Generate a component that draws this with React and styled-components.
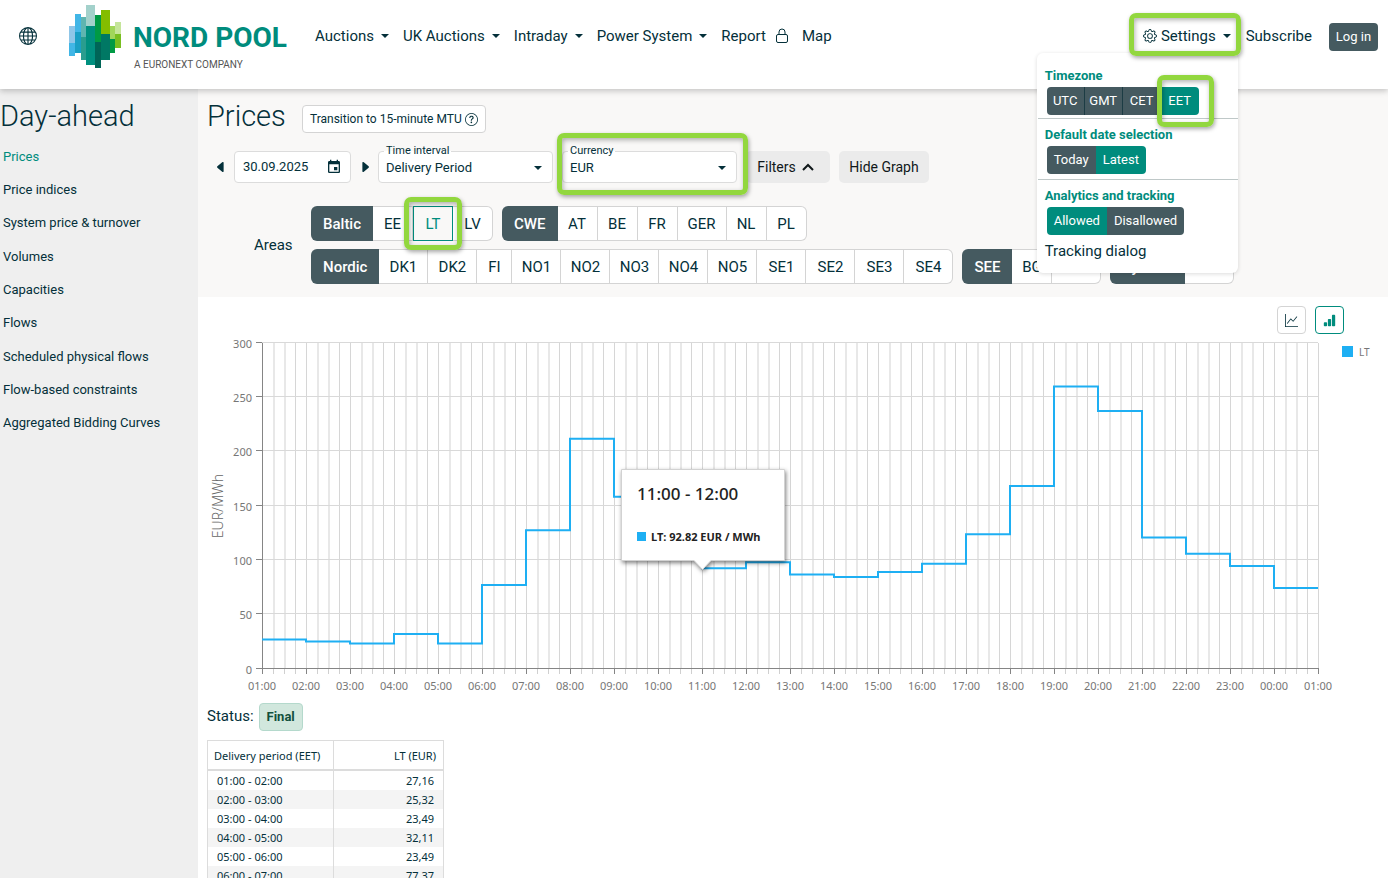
import React from "react";
import styled, { createGlobalStyle, css } from "styled-components";
import {
  BsGlobe,
  BsGear,
  BsGraphUp,
  BsBarChartFill,
  BsQuestionCircle,
  BsCaretLeftFill,
  BsCaretRightFill,
} from "react-icons/bs";
import { MdEvent } from "react-icons/md";

const ink = "#04303a";
const slate = "#455a60";
const teal = "#008c7d";
const line = "#d4d4d4";

const GlobalStyle = createGlobalStyle`
  * { box-sizing: border-box; }
  body {
    margin: 0;
    background: #fff;
    color: ${ink};
    font-family: Roboto, "Liberation Sans", sans-serif;
    font-size: 15px;
    line-height: 20px;
  }
  button, input, select { font: inherit; color: inherit; }
  button { cursor: pointer; }
`;

const Page = styled.div`
  display: flex;
  flex-direction: column;
  height: 100vh;
  overflow: hidden;
`;

/* ---------- header ---------- */

const Header = styled.header`
  position: relative;
  z-index: 5;
  flex: none;
  display: flex;
  align-items: flex-start;
  height: 89px;
  padding-right: 10px;
  background: #fff;
  box-shadow: 0 2px 6px rgba(0, 0, 0, 0.22);
`;

const IconButton = styled.button`
  display: flex;
  align-items: center;
  justify-content: center;
  padding: 0;
  border: 0;
  background: none;
  svg { flex: none; }
`;

const LanguageButton = styled(IconButton)`
  width: 20px;
  height: 20px;
  margin: 26px 30px 0 18px;
`;

const LogoLink = styled.a`
  display: block;
  width: 232px;
  height: 72px;
  svg { display: block; }
`;

const Nav = styled.nav`
  display: flex;
  gap: 14px;
  margin: 26px auto 0 15px;
`;

const navItem = css`
  display: flex;
  align-items: center;
  gap: 7px;
  padding: 0;
  border: 0;
  background: none;
  color: ${ink};
  text-decoration: none;
  white-space: nowrap;
  height: 20px;
`;

const NavButton = styled.button`${navItem}`;
const NavLink = styled.a`
  ${navItem}
  gap: 10px;
`;

const Caret = styled.span`
  width: 0;
  height: 0;
  border: 4px solid transparent;
  border-top-color: ${ink};
  border-bottom: 0;
`;

const Account = styled.div`
  display: flex;
  align-items: flex-start;
  padding-top: 26px;
`;

const SettingsMenu = styled.div`
  position: relative;
  margin-right: 15px;
`;

const SettingsButton = styled(NavButton)`
  gap: 4px;
  span { margin-left: 3px; }
`;

const SubscribeLink = styled(NavLink)`
  margin-right: 17px;
`;

const LoginButton = styled.button`
  width: 49px;
  height: 28px;
  margin-top: -3px;
  padding: 0;
  border: 0;
  border-radius: 4px;
  background: ${slate};
  color: #fff;
  font-size: 13px;
`;

const Highlight = styled.span`
  position: absolute;
  z-index: 3;
  inset: ${(p) => p.$inset};
  border: 5px solid #92d73e;
  border-radius: 7px;
  box-shadow: 1px 2px 4px rgba(0, 0, 0, 0.35), inset 1px 2px 5px rgba(0, 0, 0, 0.3);
  pointer-events: none;
`;

const Popup = styled.div`
  position: absolute;
  top: 27px;
  right: -7px;
  width: 201px;
  height: 220px;
  padding: 13px 0 0 1px;
  border-radius: 6px;
  background: #fff;
  box-shadow: 0 1px 4px rgba(0, 0, 0, 0.14);
`;

const PopupSection = styled.section`
  height: 61px;
  padding-left: 7px;
  & + & { border-top: 1px solid #bfc8c8; padding-top: 6px; }
  &:first-child { height: 52px; }
`;

const PopupTitle = styled.h3`
  margin: 0;
  color: ${teal};
  font-size: 13px;
  font-weight: 700;
  line-height: 20px;
`;

const Segments = styled.div`
  display: flex;
  margin: 1px 0 0 2px;
`;

const Segment = styled.button`
  position: relative;
  height: 28px;
  min-width: 38px;
  padding: 0 ${(p) => (p.$tight ? "4px" : "7px")};
  border: 0;
  border-right: ${(p) => (p.$divided ? "1px solid #1c3c44" : "0")};
  background: ${(p) => (p.$active ? teal : slate)};
  color: #fff;
  font-size: 13px;
  &:first-child { border-radius: 4px 0 0 4px; }
  &:last-child { border-radius: 0 4px 4px 0; }
`;

const TrackingLink = styled.a`
  display: block;
  padding-left: 7px;
  margin-top: 1px;
  color: ${ink};
  text-decoration: none;
`;

/* ---------- body ---------- */

const Body = styled.div`
  flex: 1;
  display: flex;
  min-height: 0;
`;

const Sidebar = styled.aside`
  flex: none;
  width: 198px;
  padding-top: 11px;
  background: #efefef;
`;

const Heading = styled.h1`
  margin: 0;
  font-size: 29px;
  font-weight: 300;
  line-height: 32px;
`;

const SideNav = styled.nav`
  display: grid;
  grid-auto-rows: 1fr;
  height: 300px;
  margin-top: 8px;
`;

const SideLink = styled.a`
  display: flex;
  align-items: center;
  padding-left: 3px;
  color: ${(p) => (p.$active ? teal : ink)};
  font-size: 13px;
  text-decoration: none;
`;

const Main = styled.main`
  flex: 1;
  min-width: 0;
`;

const FilterPanel = styled.section`
  padding: 11px 9px 13px;
  background: #f9f8f7;
`;

const TitleRow = styled.div`
  display: flex;
  align-items: flex-start;
  gap: 16px;
`;

const InfoButton = styled.button`
  display: flex;
  align-items: center;
  justify-content: center;
  gap: 3px;
  width: 184px;
  height: 28px;
  margin-top: 5px;
  padding: 0;
  border: 1px solid ${line};
  border-radius: 4px;
  background: #fff;
  font-size: 12px;
  white-space: nowrap;
`;

const Controls = styled.div`
  display: flex;
  align-items: center;
  gap: 9px;
  margin-top: 18px;
`;

const StepButton = styled(IconButton)`
  width: 9px;
  height: 32px;
  margin-left: ${(p) => (p.$first ? "9px" : "0")};
`;

const DateField = styled.div`
  display: flex;
  align-items: center;
  width: 117px;
  height: 32px;
  padding: 0 8px;
  border: 1px solid #dcdcdc;
  border-radius: 4px;
  background: #fff;
  input {
    flex: 1;
    min-width: 0;
    padding: 0;
    border: 0;
    background: none;
    font-size: 13px;
    outline: 0;
  }
`;

const Field = styled.div`
  position: relative;
  width: 175px;
  height: 32px;
  label {
    position: absolute;
    top: -6px;
    left: 6px;
    padding: 0 2px;
    background: linear-gradient(#f9f8f7 50%, #fff 50%);
    font-size: 11px;
    line-height: 12px;
  }
  select {
    width: 100%;
    height: 100%;
    padding: 1px 7px 0;
    border: 1px solid #dcdcdc;
    border-radius: 4px;
    background: #fff;
    font-size: 13px;
    appearance: none;
    outline: 0;
  }
`;

const FieldCaret = styled(Caret)`
  position: absolute;
  top: 15px;
  right: 11px;
  pointer-events: none;
`;

const PlainButton = styled.button`
  display: flex;
  align-items: center;
  justify-content: center;
  gap: 6px;
  width: ${(p) => (p.$wide ? "90px" : "84px")};
  height: 32px;
  padding: 0 ${(p) => (p.$wide ? "0" : "5px")} 0 0;
  border: 0;
  border-radius: 5px;
  background: #ebebeb;
  font-size: 14px;
  color: #10181a;
`;

const Areas = styled.div`
  display: flex;
  align-items: center;
  margin-top: 23px;
  padding-left: 47px;
`;

const AreasLabel = styled.div`
  flex: none;
  width: 57px;
`;

const AreaGroups = styled.div`
  display: flex;
  flex-wrap: wrap;
  gap: 8px 9px;
`;

const AreaGroup = styled.div`
  display: flex;
  height: 35px;
`;

const GroupButton = styled.button`
  padding: 0 12px;
  border: 0;
  border-radius: 6px 0 0 6px;
  background: ${slate};
  color: #fff;
  font-weight: 500;
`;

const AreaCell = styled.div`
  position: relative;
  display: flex;
`;

const areaWidths = { narrow: "35px", pair: "40px", triple: "49px" };

const AreaButton = styled.button`
  width: ${(p) => areaWidths[p.$size]};
  padding: 0;
  border: 1px solid ${(p) => (p.$active ? teal : line)};
  border-left-width: ${(p) => (p.$active ? "1px" : "0")};
  border-radius: ${(p) => (p.$last ? "0 6px 6px 0" : "0")};
  background: ${(p) => (p.$active ? "#f9f8f7" : "#fff")};
  color: ${(p) => (p.$active ? teal : ink)};
`;

/* ---------- chart ---------- */

const ChartTools = styled.div`
  display: flex;
  justify-content: flex-end;
  gap: 9px;
  padding: 9px 44px 1px 0;
`;

const ToolButton = styled.button`
  display: flex;
  align-items: center;
  justify-content: center;
  width: 29px;
  height: 28px;
  padding: 0;
  border: 1px solid ${(p) => (p.$active ? teal : line)};
  border-radius: 4px;
  background: #fff;
  color: ${(p) => (p.$active ? teal : ink)};
`;

const ChartBox = styled.div`
  padding-left: 9px;
  svg {
    display: block;
    width: 100%;
    height: auto;
    overflow: visible;
    font-family: "Noto Sans", "Open Sans", sans-serif;
  }
`;

const StatusRow = styled.div`
  display: flex;
  align-items: flex-start;
  gap: 5px;
  margin-top: 7px;
  padding-left: 9px;
  line-height: 26px;
`;

const Badge = styled.span`
  padding: 0 7px;
  border: 1px solid #b4d9cc;
  border-radius: 4px;
  background: #d1e7dd;
  color: #12503c;
  font-size: 13px;
  font-weight: 700;
`;

const PriceTable = styled.table`
  width: 237px;
  margin: 9px 0 0 9px;
  border-collapse: separate;
  border-spacing: 0;
  border: 1px solid #dcdcdc;
  font-family: "Noto Sans", "Open Sans", sans-serif;
  font-size: 11px;
  line-height: 18px;
  th {
    height: 30px;
    padding: 1px 7px 0 6px;
    border-bottom: 2px solid #dcdcdc;
    font-weight: 400;
    text-align: left;
  }
  td { height: 19px; padding: 1px 9px 0; }
  th:first-child, td:first-child { width: 126px; border-right: 1px solid #dcdcdc; }
  th:last-child, td:last-child { text-align: right; }
  tbody tr:nth-child(even) { background: #f4f4f4; }
`;

const logoBars = [
  [1, 26, 6, 17, "#8fc6e8"], [1, 43, 6, 13, "#41b6e6"],
  [7, 14, 6, 18, "#41b6e6"], [7, 32, 6, 21, "#1a9fc4"],
  [13, 17, 5, 20, "#5fb5b0"], [13, 37, 5, 23, "#2a9d8f"],
  [18, 5, 9, 21, "#a3d1cb"], [18, 26, 9, 39, "#00907f"],
  [27, 15, 6, 27, "#009a44"], [27, 42, 6, 26, "#006557"],
  [33, 10, 9, 24, "#84bd00"], [33, 34, 9, 26, "#007864"],
  [42, 26, 5, 13, "#a1d65a"], [42, 39, 5, 14, "#009a44"],
  [47, 22, 6, 12, "#c5e59a"], [47, 34, 6, 14, "#78be20"],
];

function Logo() {
  return (
    <svg width="232" height="72" viewBox="0 0 232 72" role="img" aria-label="Nord Pool">
      {logoBars.map(([x, y, w, h, fill]) => (
        <rect key={`${x}-${y}`} x={x} y={y} width={w} height={h} fill={fill} />
      ))}
      <text x="65" y="47" fontSize="28" fontWeight="700" fill={teal}>NORD POOL</text>
      <text x="66" y="68" fontSize="10" fill="#555">A EURONEXT COMPANY</text>
    </svg>
  );
}

function LockIcon() {
  return (
    <svg width="12" height="16" viewBox="0 0 12 16" fill="none" stroke="currentColor" aria-hidden="true">
      <rect x="0.5" y="6.500" width="11" height="8" rx="1.500" />
      <path d="M3 6.500V4a3 3 0 0 1 6 0v2.500" />
    </svg>
  );
}

const prices = [
  27.16, 25.32, 23.49, 32.11, 23.49, 77.37, 127.6, 212, 158.5, 118, 92.82, 98.2,
  87, 84.6, 89.3, 96.8, 124, 168.5, 260, 237.5, 121, 106, 94.8, 74.5,
];

const hour = (n) => `${String(n % 24).padStart(2, "0")}:00`;

function Chart() {
  const left = 55;
  const right = 1111;
  const top = 8;
  const base = 334;
  const step = 44;
  const y = (v) => base - (v * (base - top)) / 300;
  const path = prices
    .map((v, i) => `${i ? "L" : "M"}${left + i * step} ${y(v)}H${left + (i + 1) * step}`)
    .join("");

  return (
    <svg viewBox="0 0 1181 361" role="img" aria-label="LT prices in EUR/MWh">
      {Array.from({ length: 97 }, (_, i) => {
        const soft = i % 4 === 1 || i % 4 === 2;
        return (
          <rect
            key={i}
            x={left + i * 11}
            y={top}
            width={soft ? 2 : 1}
            height={base - top}
            fill={soft ? "#e8e8e8" : "#d6d6d6"}
          />
        );
      })}
      {[0, 50, 100, 150, 200, 250, 300].map((v) => {
        const ly = Math.floor(y(v)) - 0.5;
        return (
          <g key={v}>
            <path d={`M${left} ${ly}H${right}`} stroke="#d9d9d9" />
            <path d={`M${left - 6} ${ly}H${left}`} stroke="#858585" />
            <text x={left - 10} y={ly + 5} fontSize="11" fill="#767676" textAnchor="end">{v}</text>
          </g>
        );
      })}
      <path d={`M${left + 0.5} ${top}V${base + 5}M${left} ${base - 0.5}H${right + 1}`} stroke="#858585" fill="none" />
      {Array.from({ length: 97 }, (_, i) => (
        <path
          key={i}
          d={`M${left + i * 11 + 0.5} ${base}v5`}
          stroke={i % 4 ? "#d0d0d0" : "#858585"}
        />
      ))}
      {Array.from({ length: 25 }, (_, i) => (
        <text key={i} x={left + i * step} y={base + 21} fontSize="11" fill="#767676" textAnchor="middle">
          {hour(i + 1)}
        </text>
      ))}
      <text transform="translate(16 171) rotate(-90)" fontSize="14" fontWeight="300" fill="#666" textAnchor="middle">EUR/MWh</text>
      <path d={path} fill="none" stroke="#1eaff3" strokeWidth="2" />
      <rect x="1135" y="11" width="11" height="11" fill="#1eaff3" />
      <text x="1152" y="21" fontSize="10" fill="#767676">LT</text>
      <g>
        <path
          d="M414.500 134.500H577.500V225.500H504L495.500 234.500L487 225.500H414.500Z"
          fill="#fff"
          stroke="#d2d2d2"
          filter="drop-shadow(1px 2px 2px rgba(0,0,0,0.5))"
        />
        <text x="430" y="165" fontSize="17" fontWeight="500" fill="#222">11:00 - 12:00</text>
        <rect x="430" y="197" width="9" height="9" fill="#1eaff3" />
        <text x="444" y="206" fontSize="11" fontWeight="700" fill="#222">LT: 92.82 EUR / MWh</text>
      </g>
    </svg>
  );
}

const sideLinks = [
  "Prices", "Price indices", "System price & turnover", "Volumes", "Capacities",
  "Flows", "Scheduled physical flows", "Flow-based constraints", "Aggregated Bidding Curves",
];

const areaGroups = [
  ["Baltic", ["EE", "LT", "LV"]],
  ["CWE", ["AT", "BE", "FR", "GER", "NL", "PL"]],
  ["Nordic", ["DK1", "DK2", "FI", "NO1", "NO2", "NO3", "NO4", "NO5", "SE1", "SE2", "SE3", "SE4"]],
  ["SEE", ["BG", "TEL"]],
  ["System", ["SYS"]],
];

const areaSize = (code) => (code === "FI" ? "narrow" : code.length === 2 ? "pair" : "triple");

const tableRows = [
  ["01:00 - 02:00", "27,16"],
  ["02:00 - 03:00", "25,32"],
  ["03:00 - 04:00", "23,49"],
  ["04:00 - 05:00", "32,11"],
  ["05:00 - 06:00", "23,49"],
  ["06:00 - 07:00", "77,37"],
];

export default function App() {
  return (
    <Page>
      <GlobalStyle />
      <Header>
        <LanguageButton aria-label="Language"><BsGlobe size={18} /></LanguageButton>
        <LogoLink href="#"><Logo /></LogoLink>
        <Nav>
          {["Auctions", "UK Auctions", "Intraday", "Power System"].map((t) => (
            <NavButton key={t}>{t}<Caret /></NavButton>
          ))}
          <NavLink href="#">Report <LockIcon /></NavLink>
          <NavLink href="#">Map</NavLink>
        </Nav>
        <Account>
          <SettingsMenu>
            <SettingsButton><BsGear size={14} />Settings<Caret /></SettingsButton>
            <Popup>
              <PopupSection>
                <PopupTitle>Timezone</PopupTitle>
                <Segments>
                  <Segment $tight $divided>UTC</Segment>
                  <Segment $tight $divided>GMT</Segment>
                  <Segment $tight>CET</Segment>
                  <Segment $tight $active>EET<Highlight $inset="-12px -15px -12px -4px" /></Segment>
                </Segments>
              </PopupSection>
              <PopupSection>
                <PopupTitle>Default date selection</PopupTitle>
                <Segments>
                  <Segment>Today</Segment>
                  <Segment $active>Latest</Segment>
                </Segments>
              </PopupSection>
              <PopupSection>
                <PopupTitle>Analytics and tracking</PopupTitle>
                <Segments>
                  <Segment $active>Allowed</Segment>
                  <Segment>Disallowed</Segment>
                </Segments>
              </PopupSection>
              <TrackingLink href="#">Tracking dialog</TrackingLink>
            </Popup>
            <Highlight $inset="-13px -10px -10px -14px" />
          </SettingsMenu>
          <SubscribeLink href="#">Subscribe</SubscribeLink>
          <LoginButton>Log in</LoginButton>
        </Account>
      </Header>
      <Body>
        <Sidebar>
          <Heading as="h2">Day-ahead</Heading>
          <SideNav>
            {sideLinks.map((t, i) => (
              <SideLink key={t} href="#" $active={i === 0}>{t}</SideLink>
            ))}
          </SideNav>
        </Sidebar>
        <Main>
          <FilterPanel>
            <TitleRow>
              <Heading>Prices</Heading>
              <InfoButton>Transition to 15-minute MTU <BsQuestionCircle size={13} /></InfoButton>
            </TitleRow>
            <Controls>
              <StepButton $first aria-label="Previous day"><BsCaretLeftFill size={14} /></StepButton>
              <DateField>
                <input aria-label="Delivery date" defaultValue="30.09.2025" />
                <IconButton aria-label="Open calendar"><MdEvent size={16} /></IconButton>
              </DateField>
              <StepButton aria-label="Next day"><BsCaretRightFill size={14} /></StepButton>
              <Field>
                <select id="interval"><option>Delivery Period</option></select>
                <label htmlFor="interval">Time interval</label>
                <FieldCaret />
              </Field>
              <Field>
                <select id="currency"><option>EUR</option></select>
                <label htmlFor="currency">Currency</label>
                <FieldCaret />
                <Highlight $inset="-18px -11px -12px -5px" />
              </Field>
              <PlainButton>
                Filters
                <svg width="12" height="8" viewBox="0 0 12 8" fill="none" stroke="currentColor" strokeWidth="2">
                  <path d="M1 7L6 2L11 7" />
                </svg>
              </PlainButton>
              <PlainButton $wide>Hide Graph</PlainButton>
            </Controls>
            <Areas>
              <AreasLabel>Areas</AreasLabel>
              <AreaGroups>
                {areaGroups.map(([name, codes]) => (
                  <AreaGroup key={name}>
                    <GroupButton>{name}</GroupButton>
                    {codes.map((code, i) => (
                      <AreaCell key={code}>
                        <AreaButton $size={areaSize(code)} $active={code === "LT"} $last={i === codes.length - 1}>
                          {code}
                        </AreaButton>
                        {code === "LT" && <Highlight $inset="-9px" />}
                      </AreaCell>
                    ))}
                  </AreaGroup>
                ))}
              </AreaGroups>
            </Areas>
          </FilterPanel>
          <ChartTools>
            <ToolButton aria-label="Line chart"><BsGraphUp size={13} /></ToolButton>
            <ToolButton $active aria-label="Column chart"><BsBarChartFill size={13} /></ToolButton>
          </ChartTools>
          <ChartBox><Chart /></ChartBox>
          <StatusRow>Status: <Badge>Final</Badge></StatusRow>
          <PriceTable>
            <thead>
              <tr><th>Delivery period (EET)</th><th>LT (EUR)</th></tr>
            </thead>
            <tbody>
              {tableRows.map(([period, price]) => (
                <tr key={period}><td>{period}</td><td>{price}</td></tr>
              ))}
            </tbody>
          </PriceTable>
        </Main>
      </Body>
    </Page>
  );
}
